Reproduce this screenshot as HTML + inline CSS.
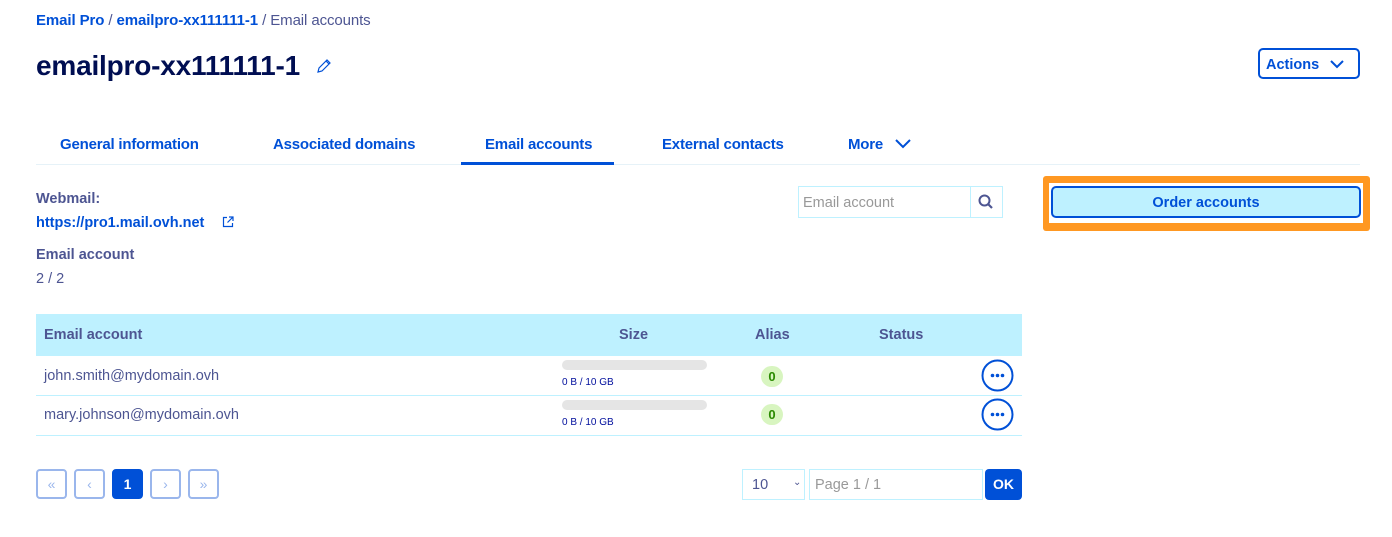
<!DOCTYPE html>
<html><head><meta charset="utf-8"><style>
*{box-sizing:border-box;margin:0;padding:0}
body{width:1392px;height:537px;background:#fff;font-family:"Liberation Sans",sans-serif;position:relative;overflow:hidden;color:#4d5592}
.a{position:absolute;white-space:nowrap}
.blue{color:#0050d7}
.b{font-weight:bold}
.tab{position:absolute;top:136px;font-size:15px;font-weight:bold;color:#0050d7;letter-spacing:-0.2px}
.pg{position:absolute;top:469px;width:31px;height:30px;border:2px solid #9ab6ec;border-radius:4px;color:#9ab6ec;font-size:14px;text-align:center;line-height:26px}
</style></head><body>
<div class="a" style="left:36px;top:12px;font-size:15px;letter-spacing:-0.1px"><span class="blue b">Email Pro</span> / <span class="blue b">emailpro-xx111111-1</span> / Email accounts</div>
<div class="a b" style="left:36px;top:50px;font-size:28px;color:#000e52;letter-spacing:-0.2px">emailpro-xx111111-1</div>
<svg class="a" style="left:315px;top:57px" width="18" height="18" viewBox="0 0 18 18"><path d="M3 15l1-4 8-8 3 3-8 8z M11 4l3 3" fill="none" stroke="#0050d7" stroke-width="1.2"/></svg>
<div class="a" style="left:1258px;top:48px;width:102px;height:31px;border:2px solid #0050d7;border-radius:5px"></div>
<div class="a b blue" style="left:1266px;top:57px;font-size:14.5px">Actions</div>
<svg class="a" style="left:1329px;top:58px" width="16" height="12"><path d="M2 3l6 6 6-6" fill="none" stroke="#0050d7" stroke-width="2"/></svg>
<div class="tab" style="left:60px">General information</div>
<div class="tab" style="left:273px">Associated domains</div>
<div class="tab" style="left:485px">Email accounts</div>
<div class="tab" style="left:662px">External contacts</div>
<div class="tab" style="left:848px">More</div>
<svg class="a" style="left:894px;top:137px" width="18" height="14"><path d="M2 3l7 7 7-7" fill="none" stroke="#0050d7" stroke-width="2"/></svg>
<div class="a" style="left:36px;top:164px;width:1324px;height:1px;background:#e6f2f8"></div>
<div class="a" style="left:461px;top:162px;width:153px;height:3px;background:#0050d7"></div>
<div class="a b" style="left:36px;top:191px;font-size:14.5px">Webmail:</div>
<div class="a b blue" style="left:36px;top:215px;font-size:14.5px">https://pro1.mail.ovh.net</div>
<svg class="a" style="left:222px;top:216px" width="12" height="12"><path d="M5 1.5H1.5v9h9V7 M7 1h4v4 M11 1L5.5 6.5" fill="none" stroke="#0050d7" stroke-width="1.2"/></svg>
<div class="a b" style="left:36px;top:247px;font-size:14.5px">Email account</div>
<div class="a" style="left:36px;top:271px;font-size:14.5px">2 / 2</div>
<div class="a" style="left:798px;top:186px;width:205px;height:32px;border:1px solid #bef1ff"></div>
<div class="a" style="left:970px;top:187px;width:1px;height:30px;background:#bef1ff"></div>
<div class="a" style="left:803px;top:195px;font-size:14.5px;color:#999">Email account</div>
<svg class="a" style="left:978px;top:194px" width="16" height="16"><circle cx="6.5" cy="6.5" r="5" fill="none" stroke="#4d5592" stroke-width="2"/><path d="M10 10l4 4" stroke="#4d5592" stroke-width="2.2"/></svg>
<div class="a" style="left:1043px;top:176px;width:327px;height:55px;background:#ff9822;border-radius:3px"></div>
<div class="a" style="left:1049px;top:183px;width:314px;height:40px;background:#fff"></div>
<div class="a b blue" style="left:1051px;top:186px;width:310px;height:32px;background:#bef1ff;border:2px solid #0050d7;border-radius:5px;text-align:center;line-height:30px;font-size:14.5px">Order accounts</div>
<div class="a" style="left:36px;top:314px;width:986px;height:42px;background:#bef1ff"></div>
<div class="a b" style="left:44px;top:327px;font-size:14.5px">Email account</div>
<div class="a b" style="left:619px;top:327px;font-size:14.5px">Size</div>
<div class="a b" style="left:755px;top:327px;font-size:14.5px">Alias</div>
<div class="a b" style="left:879px;top:327px;font-size:14.5px">Status</div>
<div class="a" style="left:36px;top:395px;width:986px;height:1px;background:#bef1ff"></div>
<div class="a" style="left:36px;top:435px;width:986px;height:1px;background:#bef1ff"></div>
<div class="a" style="left:44px;top:368px;font-size:14.5px">john.smith@mydomain.ovh</div>
<div class="a" style="left:44px;top:407px;font-size:14.5px">mary.johnson@mydomain.ovh</div>
<div class="a" style="left:562px;top:360px;width:145px;height:10px;border-radius:5px;background:#e5e5e5"></div>
<div class="a" style="left:562px;top:400px;width:145px;height:10px;border-radius:5px;background:#e5e5e5"></div>
<div class="a" style="left:562px;top:377px;font-size:10px;color:#000e9c">0 B / 10 GB</div>
<div class="a" style="left:562px;top:417px;font-size:10px;color:#000e9c">0 B / 10 GB</div>
<div class="a b" style="left:761px;top:366px;width:22px;height:21px;border-radius:11px;background:#d8f5c0;color:#2a8a00;font-size:13px;text-align:center;line-height:21px">0</div>
<div class="a b" style="left:761px;top:404px;width:22px;height:21px;border-radius:11px;background:#d8f5c0;color:#2a8a00;font-size:13px;text-align:center;line-height:21px">0</div>
<svg class="a" style="left:981px;top:359px" width="33" height="33"><circle cx="16.5" cy="16.5" r="15" fill="none" stroke="#0050d7" stroke-width="2"/><circle cx="11.5" cy="16.5" r="1.8" fill="#0050d7"/><circle cx="16.5" cy="16.5" r="1.8" fill="#0050d7"/><circle cx="21.5" cy="16.5" r="1.8" fill="#0050d7"/></svg>
<svg class="a" style="left:981px;top:398px" width="33" height="33"><circle cx="16.5" cy="16.5" r="15" fill="none" stroke="#0050d7" stroke-width="2"/><circle cx="11.5" cy="16.5" r="1.8" fill="#0050d7"/><circle cx="16.5" cy="16.5" r="1.8" fill="#0050d7"/><circle cx="21.5" cy="16.5" r="1.8" fill="#0050d7"/></svg>
<div class="pg" style="left:36px">«</div>
<div class="pg" style="left:74px">‹</div>
<div class="pg b" style="left:112px;background:#0050d7;border-color:#0050d7;color:#fff">1</div>
<div class="pg" style="left:150px">›</div>
<div class="pg" style="left:188px">»</div>
<div class="a" style="left:742px;top:469px;width:63px;height:31px;border:1px solid #bef1ff;font-size:14.5px;padding:7px 0 0 9px">10<span style="position:absolute;left:50px;top:7px;font-size:10px">⌄</span></div>
<div class="a" style="left:809px;top:469px;width:174px;height:31px;border:1px solid #bef1ff;font-size:14.5px;color:#999;padding:7px 0 0 5px">Page 1 / 1</div>
<div class="a b" style="left:985px;top:469px;width:37px;height:31px;background:#0050d7;border-radius:4px;color:#fff;font-size:14px;text-align:center;line-height:31px">OK</div>
</body></html>
